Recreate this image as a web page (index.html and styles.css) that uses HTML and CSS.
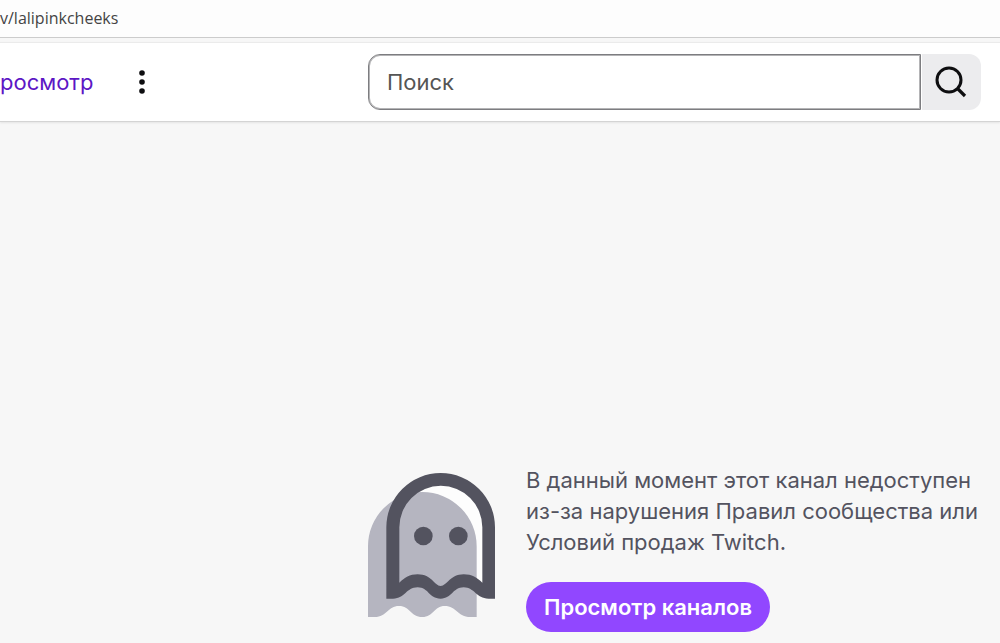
FILE: index.html
```html
<!DOCTYPE html>
<html lang="ru">
<head>
<meta charset="utf-8">
<meta name="viewport" content="width=device-width, initial-scale=1">
<title>lalipinkcheeks - Twitch</title>
<link rel="stylesheet" href="styles.css">
</head>
<body>
<div class="address-bar"><span class="address-url">v/lalipinkcheeks</span></div>
<header class="nav">
  <a class="nav-link" href="#">росмотр</a>
  <button class="more" type="button" aria-label="Ещё">
    <svg width="8" height="26" viewBox="0 0 8 26" fill="#0e0e10"><circle cx="4" cy="4" r="2.8"/><circle cx="4" cy="13" r="2.8"/><circle cx="4" cy="22" r="2.8"/></svg>
  </button>
  <form class="search" role="search">
    <input class="search-input" type="search" placeholder="Поиск" aria-label="Поиск">
    <button class="search-button" type="button" aria-label="Найти">
      <svg width="32" height="32" viewBox="0 0 32 32" fill="none" stroke="#0e0e10" stroke-width="3"><circle cx="14" cy="14" r="12"/><path d="M22 22l8 8" stroke-width="3.2"/></svg>
    </button>
  </form>
</header>
<main class="content">
  <svg class="ghost" viewBox="38 38 381 432" aria-hidden="true">
    <path fill="#fdfdfd" d="M120 370V201A136 136 0 0 1 394 201V380H360L325 355Z"/>
    <path fill="#b5b5c0" d="M38 470V258A163 163 0 0 1 364 258V470H345C306 470 304 437 268 437C236 437 235 470 201 470C165 470 165 437 131 437C97 437 95 470 58 470Z"/>
    <path fill="#53535f" fill-rule="evenodd" d="M93 415V201A163 163 0 0 1 419 201V415H400C362 415 358 381 325 381C292 381 290 415 256 415C220 415 220 381 187 381C152 381 150 415 113 415ZM132 367C148 352 163 342 187 342C230 342 237 377 256 377C275 377 284 342 325 342C350 342 365 352 381 367V201A124.500 124.500 0 0 0 132 201Z"/>
    <circle cx="204" cy="227" r="28" fill="#53535f"/><circle cx="309" cy="227" r="28" fill="#53535f"/>
  </svg>
  <section class="notice">
    <p class="notice-text">В данный момент этот канал недоступен из-за нарушения Правил сообщества или Условий продаж Twitch.</p>
    <a class="browse" href="#">Просмотр каналов</a>
  </section>
</main>
</body>
</html>
```
FILE: styles.css
```css
* {
  box-sizing: border-box;
}

body {
  margin: 0;
  min-height: 100vh;
  display: flex;
  flex-direction: column;
  overflow-x: hidden;
  background: #f7f7f7;
  color: #53535f;
  font-family: Inter, "Liberation Sans", sans-serif;
  font-size: 22px;
}

.address-bar {
  padding: 6px 0 7px;
  background: #fdfdfd;
  border-bottom: 1px solid #ccc;
}

.address-url {
  display: block;
  color: #444;
  font-family: "Open Sans", "Noto Sans", sans-serif;
  font-size: 16px;
  line-height: 24px;
}

.nav {
  display: flex;
  align-items: center;
  margin-top: 4px;
  padding: 11px 19px 11px 0;
  background: #fff;
  border-top: 1px solid #ebebeb;
  border-bottom: 1px solid #d4d4d4;
  box-shadow: 0 1px 2px rgba(0, 0, 0, 0.08);
}

.nav-link {
  width: 92px;
  color: #5c16c5;
  line-height: 32px;
  text-decoration: none;
}

.more,
.search-button {
  display: flex;
  align-items: center;
  justify-content: center;
  padding: 0;
  border: 0;
  background: none;
}

.more {
  width: 40px;
  height: 40px;
  margin-left: 30px;
}

.search {
  display: flex;
  flex: 1;
  gap: 1px;
  margin-left: 206px;
}

.search-input {
  flex: 1;
  min-width: 0;
  height: 56px;
  padding: 0 18px;
  border: 1px solid #7d7d80;
  border-radius: 12px 0 0 12px;
  box-shadow: inset 0 0 0 1px #b4b4b6;
  background: #fff;
  color: #53535f;
  font: inherit;
  appearance: none;
}

.search-input::placeholder {
  color: #555;
  opacity: 1;
}

.search-button {
  width: 59px;
  height: 56px;
  padding-right: 2px;
  border-radius: 0 12px 12px 0;
  background: #ececee;
}

.content {
  display: flex;
  flex: 1;
  align-items: flex-end;
  gap: 31px;
  padding: 0 16px 11px 368px;
}

.ghost {
  flex: none;
  width: 127px;
  height: 144px;
  margin-bottom: 15px;
}

.notice {
  display: flex;
  flex-direction: column;
  align-items: flex-start;
  gap: 24px;
}

.notice-text {
  max-width: 460px;
  margin: 0;
  line-height: 31px;
}

.browse {
  padding: 0 18px;
  border-radius: 25px;
  background: #9147ff;
  color: #fff;
  font-weight: 600;
  line-height: 50px;
  text-decoration: none;
}
```
